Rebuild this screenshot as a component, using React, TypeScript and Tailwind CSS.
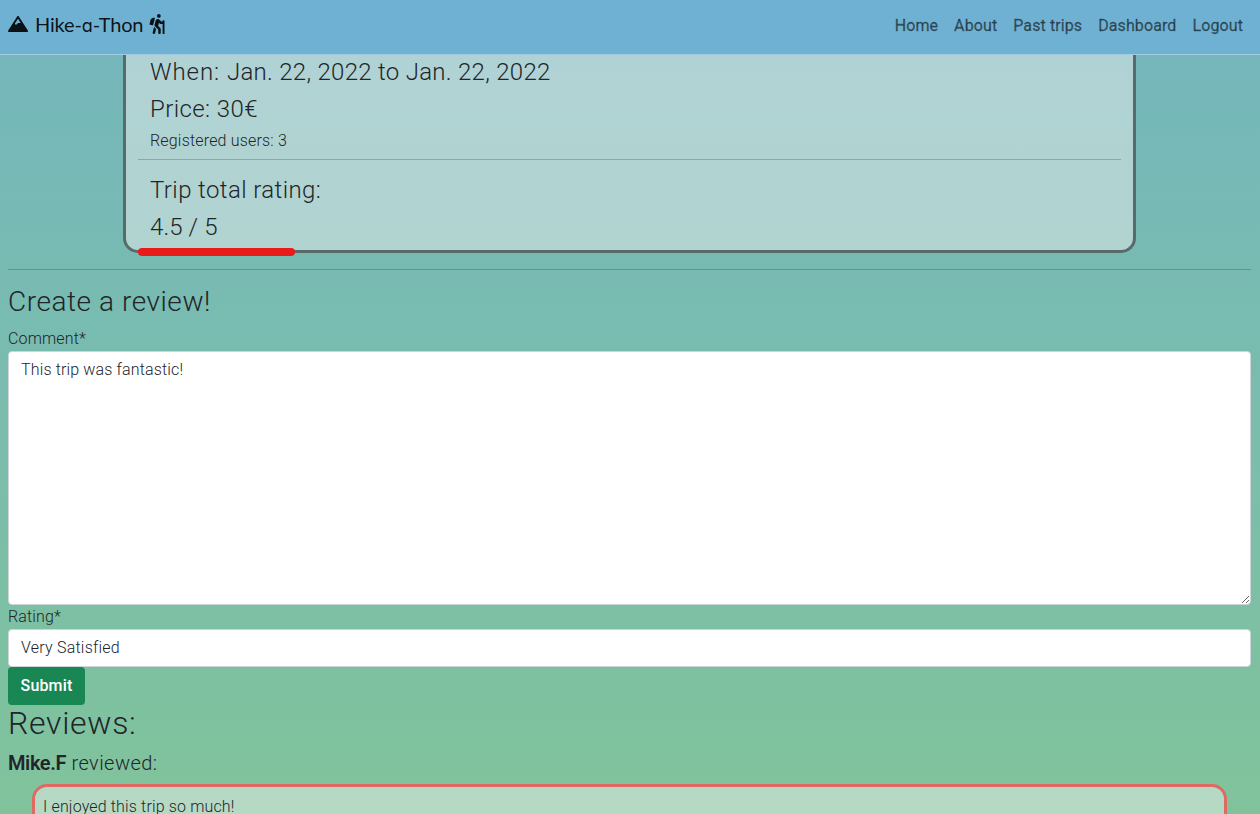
import type { ReactNode } from "react";
import { FaHiking, FaMountain } from "react-icons/fa";

const links = ["Home", "About", "Past trips", "Dashboard", "Logout"];

function Header() {
  return (
    <header className="flex h-[55px] shrink-0 items-center justify-between border-b border-[#a3cbe0] bg-[#6fb1d2] pr-[17px] pl-2">
      <a className="flex items-center text-black/90">
        <FaMountain className="h-4 w-5 -translate-y-[3px]" />
        <span className="ml-[7px] -translate-y-[2px] font-['Lato',sans-serif] text-[20px] leading-[30px] font-normal tracking-[-0.15px]">
          Hike-
          <span className="font-['Inter',sans-serif] text-[18px] font-normal [font-feature-settings:'cv11']">a</span>
          -Thon
        </span>
        <FaHiking className="ml-[6px] h-5 w-4 -translate-y-[3px]" />
      </a>
      <nav className="flex gap-4 text-[16px] font-normal tracking-[0.1px] text-black/55 [-webkit-text-stroke:0.3px]">
        {links.map((link) => (
          <a key={link} className="-translate-y-px">
            {link}
          </a>
        ))}
      </nav>
    </header>
  );
}

function CardHeading({ children, className }: { children: ReactNode; className: string }) {
  return <h4 className={`mb-2 px-3 text-[24px] leading-[28.8px] ${className}`}>{children}</h4>;
}

function TripCard() {
  return (
    <section className="mx-[115px] h-[198px] rounded-b-[15px] border-3 border-t-0 border-[#586a69] bg-[#f0f0f0]/48 px-3 pt-[3px]">
      <CardHeading className="tracking-[0.29px]">
        <span className="tracking-[0.95px]">When: </span>Jan. 22, 2022 to Jan. 22, 2022
      </CardHeading>
      <CardHeading className="tracking-[0.4px]">Price: 30€</CardHeading>
      <p className="-mt-[3px] px-3 text-[16px] leading-6 tracking-[0.18px]">Registered users: 3</p>
      <hr className="mt-[6px] mb-4 border-[#212529]/25" />
      <CardHeading className="tracking-[0.4px]">Trip total rating:</CardHeading>
      <div className="relative mt-[9px]">
        <CardHeading className="tracking-[0.1px]">4.5 / 5</CardHeading>
        <div className="absolute top-[35px] left-0 h-2 w-[157px] rounded-full bg-[#e81b1b]" />
      </div>
    </section>
  );
}

function ReviewForm() {
  return (
    <form className="text-[16px] leading-6 tracking-[0.15px]">
      <h3 className="-mt-px mb-2 text-[28px] leading-[33.6px] tracking-[0.55px]">Create a review!</h3>
      <label className="block h-[24px]">Comment*</label>
      <textarea
        className="block h-[254px] w-full rounded border border-[#ced4da] bg-white px-3 py-1.5 outline-none"
        defaultValue="This trip was fantastic!"
      />
      <label className="block">Rating*</label>
      <div className="h-[38px] rounded border border-[#ced4da] bg-white px-3 py-1.5 tracking-[0.22px]">
        Very Satisfied
      </div>
      <button type="button" className="block h-[38px] w-[77px] rounded bg-[#198754] font-medium text-white">
        Submit
      </button>
    </form>
  );
}

function Reviews() {
  return (
    <section>
      <h2 className="-mt-px mb-[9px] text-[32px] leading-[38.4px] tracking-[0.7px]">Reviews:</h2>
      <h5 className="mb-[9px] text-[20px] leading-6 tracking-[0.45px]">
        <strong className="font-semibold tracking-[-0.4px]">Mike.F</strong> reviewed:
      </h5>
      <div className="mx-6 rounded-[15px] border-3 border-[#df6a62] bg-[#f0f0f0]/48 p-2 text-[16px] leading-6 tracking-[0.15px]">
        I enjoyed this trip so much!
      </div>
    </section>
  );
}

export default function App() {
  return (
    <div className="flex h-[814px] flex-col overflow-hidden bg-linear-to-b from-[#74b6bd] to-[#80c39b] font-['Roboto',sans-serif] font-light text-[#212529]">
      <Header />
      <main className="min-h-0 flex-1 pr-[9px] pl-2">
        <TripCard />
        <hr className="my-4 border-[#212529]/25" />
        <ReviewForm />
        <Reviews />
      </main>
    </div>
  );
}
